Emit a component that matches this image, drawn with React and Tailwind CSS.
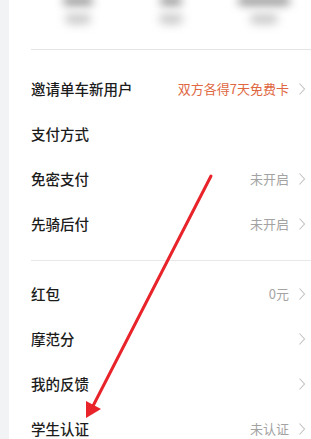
import React from "react";

const Chevron = () => (
  <svg width="8" height="14" viewBox="0 0 8 14" className="ml-[9px] shrink-0">
    <path d="M1.5 1.5 L6.5 7 L1.5 12.5" fill="none" stroke="#c2c2c2" strokeWidth="1.1" />
  </svg>
);

const Row = ({ title, value, valueClass = "text-[#a3a3a3]", arrow = true }) => (
  <div className="h-[45px] flex items-center justify-between pr-[5px]">
    <span className="text-[14.5px] font-medium text-[#1c1c1c]">{title}</span>
    <div className="flex items-center">
      {value && <span className={`text-[13px] ${valueClass}`}>{value}</span>}
      {arrow && <Chevron />}
    </div>
  </div>
);

const Stat = ({ top, bottom }) => (
  <div className="flex-1 flex flex-col items-center">
    <div className={`h-[8px] -mt-[5px] rounded-full bg-[#8a8a8a] blur-[5px] ${top}`} />
    <div className={`h-[10px] mt-[9px] rounded-full bg-[#c8c8c8] blur-[5px] ${bottom}`} />
  </div>
);

export default function App() {
  return (
    <div
      className="relative w-[311px] h-[439px] overflow-hidden bg-[#f2f3f5] flex"
      style={{ fontFamily: '"Noto Sans CJK SC", "Noto Sans", sans-serif' }}
    >
      <div className="w-[9px] shrink-0" />
      <div className="flex-1 bg-white pl-[22px]">
        <div className="h-[49px] flex pt-[2px]">
          <Stat top="w-[30px]" bottom="w-[26px]" />
          <Stat top="w-[22px]" bottom="w-[24px]" />
          <Stat top="w-[52px]" bottom="w-[28px]" />
        </div>
        <div className="h-px bg-[#e4e4e4]" />
        <div className="pt-[16px]">
          <Row title="邀请单车新用户" value="双方各得7天免费卡" valueClass="text-[#e0673f]" />
          <Row title="支付方式" arrow={false} />
          <Row title="免密支付" value="未开启" />
          <Row title="先骑后付" value="未开启" />
        </div>
        <div className="h-px bg-[#e8e8e8] mt-[14px]" />
        <div className="pt-[10px]">
          <Row title="红包" value="0元" />
          <Row title="摩范分" />
          <Row title="我的反馈" />
          <Row title="学生认证" value="未认证" />
        </div>
      </div>
      <svg className="absolute left-0 top-0 pointer-events-none" width="311" height="439">
        <line x1="211" y1="176" x2="93" y2="406" stroke="#e8232a" strokeWidth="3" strokeLinecap="round" />
        <polygon points="86,418 86,401 101,409" fill="#e8232a" />
      </svg>
    </div>
  );
}
